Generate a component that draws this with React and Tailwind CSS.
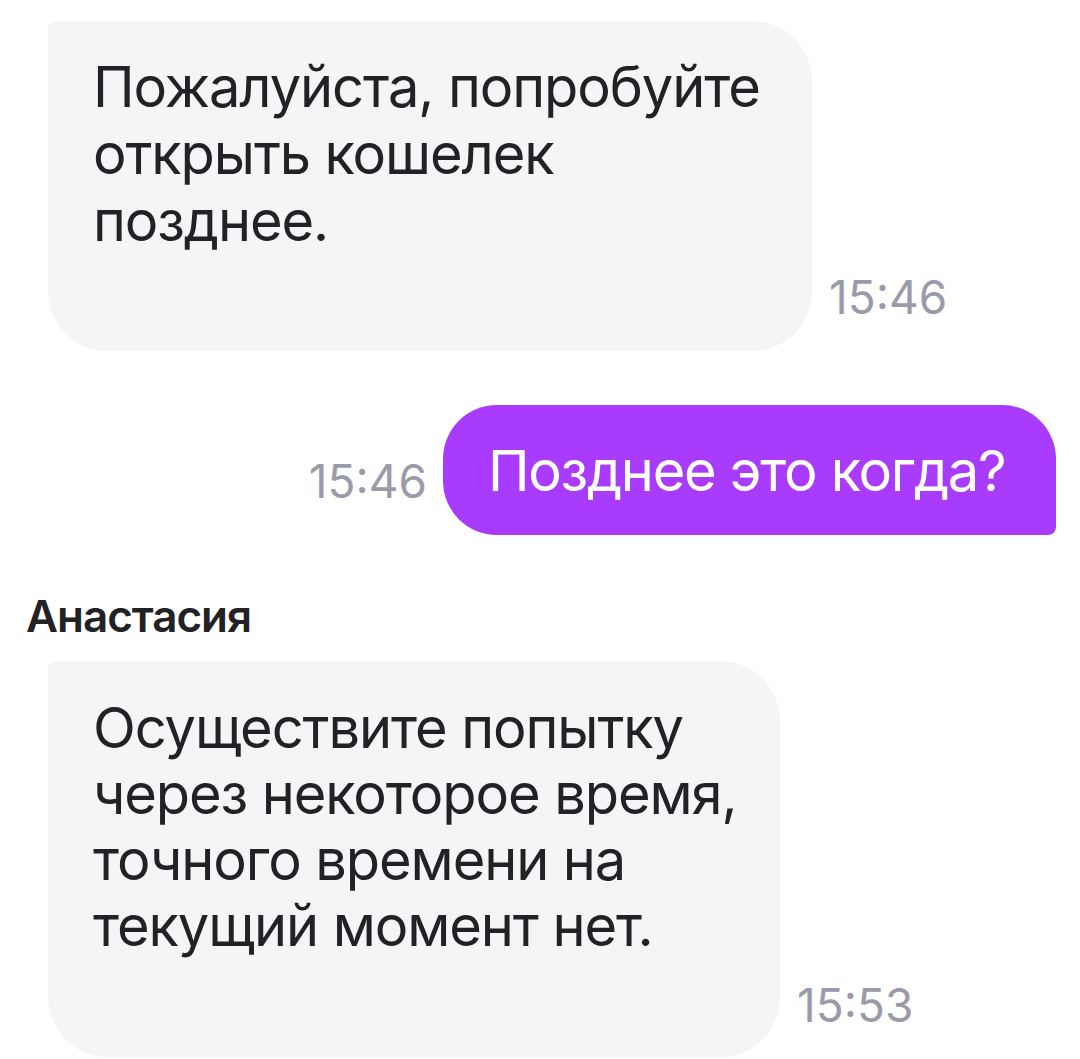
export default function App() {
  return (
    <div className="w-[1080px] h-[1059px] bg-white overflow-hidden font-['Inter','Noto_Sans',sans-serif] text-[#222226]">
      <div className="flex flex-col pt-[21px]">
        <div className="flex items-end pl-[48px] gap-[17px]">
          <div className="w-[764px] h-[330px] shrink-0 bg-[#f5f5f7] rounded-[60px] rounded-tl-[8px] pl-[45px] pt-[33px] text-[56px] leading-[67px] tracking-[-1.1px] whitespace-nowrap">
            Пожалуйста, попробуйте
            <br />
            открыть кошелек
            <br />
            позднее.
          </div>
          <div className="text-[46px] leading-none text-[#9b9aa8] mb-[31px]">15:46</div>
        </div>

        <div className="flex items-end justify-end pr-[24px] gap-[16px] mt-[54px]">
          <div className="text-[46px] leading-none text-[#9b9aa8] mb-[31px]">15:46</div>
          <div className="w-[613px] h-[130px] shrink-0 bg-[#a93bfd] rounded-[54px] rounded-br-[8px] pl-[45px] pt-[33px] text-[56px] leading-[67px] tracking-[-1.3px] text-white whitespace-nowrap">
            Позднее это когда?
          </div>
        </div>

        <div className="pl-[26px] mt-[57px] text-[44px] leading-[48px] font-semibold tracking-[-1px]">Анастасия</div>

        <div className="flex items-end pl-[48px] gap-[17px] mt-[21px]">
          <div className="w-[732px] h-[396px] shrink-0 bg-[#f5f5f7] rounded-[60px] rounded-tl-[8px] pl-[45px] pt-[34px] text-[56px] leading-[66px] tracking-[-1.1px] whitespace-nowrap">
            Осуществите попытку
            <br />
            через некоторое время,
            <br />
            точного времени на
            <br />
            текущий момент нет.
          </div>
          <div className="text-[46px] leading-none text-[#9b9aa8] mb-[29px]">15:53</div>
        </div>
      </div>
    </div>
  );
}
